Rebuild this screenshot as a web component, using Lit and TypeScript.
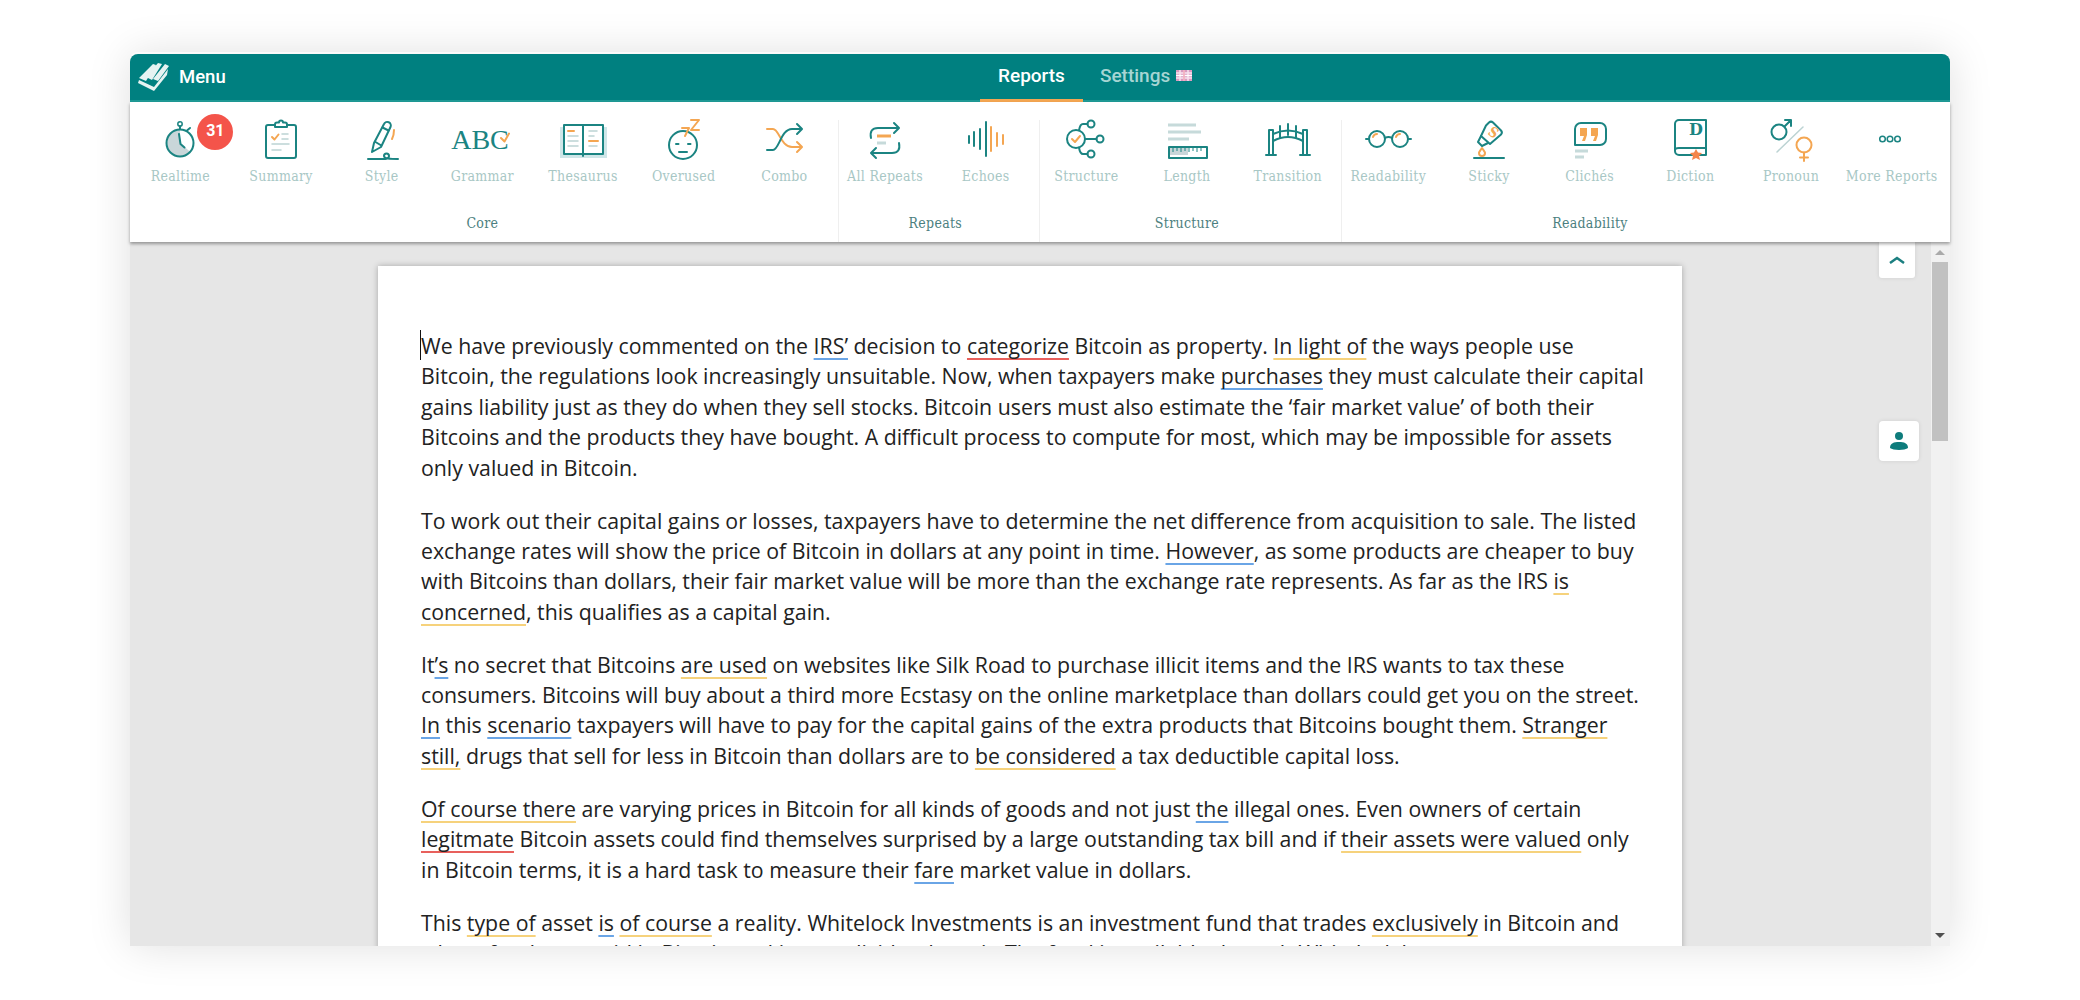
import { LitElement, html, svg, css } from "lit";
import { customElement } from "lit/decorators.js";

const icons: Record<string, unknown> = {
  realtime: svg`<path class="f" d="M32 11v12.700l10 9A13 13 0 0 1 19 23.700a13 13 0 0 1 13-12.700z"/><circle class="t" cx="32" cy="24" r="13.500"/><circle class="t1" cx="32" cy="5" r="2.200"/><path class="t" d="M32 7v3M39 11.500l3-2.500"/><path class="t" d="M31 15l1.500 10 4 3.500"/>`,
  summary: svg`<rect class="t" x="17" y="6" width="30" height="33" rx="2"/><path class="tw" d="M26 8V5.500a2 2 0 0 1 2-2h2a2 2 0 0 1 4 0h2a2 2 0 0 1 2 2V8z"/><path class="o" d="M23 18l2.500 2.500 4-5"/><path class="g" d="M33 15h6M33 20h6M23 25h17M23 31h9"/>`,
  style: svg`<path class="t" d="M22 33l2-9L34 5a3.500 3.500 0 0 1 6.500 3L31 28z"/><path class="t" d="M25.500 23l5 3M32.500 8.500l6 3"/><path class="o" d="M44 11q0 5-2 9"/><path class="t" d="M18 40h12c3 0 9 1 9-3a2.500 2.500 0 0 0-5 0c0 3 6 3 14 3"/>`,
  grammar: svg`<text class="abc" x="30" y="30" text-anchor="middle">ABC</text><path class="o" d="M51 19l3.500 3.500 4.500-8"/>`,
  thesaurus: svg`<rect class="fb" x="9" y="8" width="47" height="31"/><path class="tw" d="M13 6h19v29H13zM32 6h20v29H32z"/><path class="t" d="M32 35v2"/><path class="o" d="M17 12h6M38 22h9"/><path class="g" d="M17 17h10M17 22h10M17 27h10M38 12h8M38 17h5M38 27h8"/>`,
  overused: svg`<circle class="t" cx="31" cy="26" r="14"/><path class="t" d="M24 25h2.500M36 25h2.500M27 33h8"/><path class="o" d="M39 1h8l-8 10h8M30 9h7l-4 8"/>`,
  combo: svg`<path class="o" d="M15 10h6c6 0 8 18 19 18h9M45 23l5 5-5 5"/><path class="t" d="M15 31h6c6 0 8-21 19-21h9M45 5l5 5-5 5"/>`,
  repeats: svg`<path class="t" d="M18 19q-2-10 7-10h20M41 4l5 5-5 5M46 24q2 10-7 10H19M23 29l-5 5 5 5"/><path class="o3" d="M24 17h14"/><path class="g3" d="M24 24h9"/>`,
  echoes: svg`<path class="t" d="M15 17v7M20 13v14M26 10v20M32 3v34"/><path class="o" d="M37 8v24M43 14v13M49 16v9"/>`,
  structure: svg`<circle class="t" cx="22" cy="20" r="9"/><circle class="t" cx="37" cy="5" r="3.500"/><circle class="t" cx="46" cy="20" r="3.500"/><circle class="t" cx="37" cy="35" r="3.500"/><path class="t" d="M33.500 5H29q-3 0-4 6.500M31 20h11.500M33.500 35H29q-3 0-4-6.500"/><path class="o" d="M18 20l3 3 5-6"/>`,
  length: svg`<path class="g3" d="M13 6h28M13 13h33M13 20h21"/><rect class="f" x="15" y="29" width="18" height="7"/><rect class="t" x="14" y="28" width="38" height="11"/><path class="t1s" d="M18 28v5M22 28v4M26 28v5M30 28v4M34 28v5M38 28v4M42 28v5M46 28v4"/>`,
  transition: svg`<path class="t" d="M13 35V11M17 35V11M47 35V11M51 35V11M13 11h4M47 11h4M10 36h10M44 36h10"/><path class="t" d="M17 22q15-8 30 0M17 15q15-7 30 0"/><path class="t" d="M24 7v12M32 5v11M40 7v12"/>`,
  readability: svg`<circle class="t" cx="21" cy="20" r="8"/><circle class="t" cx="44" cy="20" r="8"/><path class="t" d="M29 19q3.500-2 7 0M13 20h-3M52 20h3"/><path class="o" d="M17 18q1-3 4-3M40 18q1-3 4-3"/>`,
  sticky: svg`<path class="t" d="M29 6.500l3-3a3 3 0 0 1 4 0l8 8a3 3 0 0 1 0 4L33 25l-9-8z"/><path class="t" d="M24 17l-3 6 4 4 6-3"/><text class="s" x="36" y="18" text-anchor="middle" transform="rotate(35 36 14)">S</text><path class="o" d="M25 29c-2 3-3 4-3 5a3 3 0 0 0 6 0c0-1-1-2-3-5z"/><path class="t" d="M17 39h30"/>`,
  cliches: svg`<path class="t" d="M23 4h19a6 6 0 0 1 6 6v10a6 6 0 0 1-6 6H19l-2 0V10a6 6 0 0 1 6-6z"/><path class="of" d="M22 9h7v7l-2 6h-3l2-5h-4zM33 9h7v7l-2 6h-3l2-5h-4z"/><path class="g3" d="M17 32h13M17 38h9"/>`,
  diction: svg`<path class="t" d="M48 1v35H21a4 4 0 0 1-4-4V5a4 4 0 0 1 4-4zM17 31q0-2 4-2h27"/><text class="d" x="38" y="16" text-anchor="middle">D</text><path class="ofs" d="M38 30l2 3.500 4 .5-3 3 1 4-4-2-4 2 1-4-3-3 4-.5z"/>`,
  pronoun: svg`<circle class="t" cx="20" cy="13" r="7.500"/><path class="t" d="M25.500 7.500L32 1M26 1h6v6"/><path class="g" d="M18 33L44 8"/><circle class="o" cx="45" cy="26" r="7.500"/><path class="o" d="M45 33.500V42M41 38.500h8"/>`,
  more: svg`<circle class="t1" cx="22.500" cy="20" r="2.800"/><circle class="t1" cx="30" cy="20" r="2.800"/><circle class="t1" cx="37.500" cy="20" r="2.800"/>`,
};

const groups = [
  { name: "Core", items: [["Realtime", "realtime"], ["Summary", "summary"], ["Style", "style"], ["Grammar", "grammar"], ["Thesaurus", "thesaurus"], ["Overused", "overused"], ["Combo", "combo"]] },
  { name: "Repeats", items: [["All Repeats", "repeats"], ["Echoes", "echoes"]] },
  { name: "Structure", items: [["Structure", "structure"], ["Length", "length"], ["Transition", "transition"]] },
  { name: "Readability", items: [["Readability", "readability"], ["Sticky", "sticky"], ["Clichés", "cliches"], ["Diction", "diction"], ["Pronoun", "pronoun"], ["More Reports", "more"]] },
];

@customElement("app-root")
export class AppRoot extends LitElement {
  static styles = css`
    :host { display: block; height: 1000px; background: #fff; overflow: hidden; padding: 54px 130px 0; box-sizing: border-box; }
    .window { height: 892px; display: flex; flex-direction: column; border-radius: 8px 8px 0 0; background: #e6e6e6; box-shadow: 0 -2px 0 rgba(255,255,255,.7), 0 0 44px rgba(0,0,0,.13); position: relative; }
    .topbar { height: 46px; background: #008080; border-bottom: 2px solid #1f9a96; border-radius: 8px 8px 0 0; display: grid; grid-template-columns: 850px auto 1fr; align-items: stretch; flex: none; }
    .brand { display: flex; align-items: center; gap: 9px; padding-left: 8px; color: #fff; font: 500 18.500px Roboto, sans-serif; }
    .tabs { display: flex; align-items: stretch; }
    .tab { display: flex; align-items: center; gap: 6px; padding: 0 18px 3px; color: #fff; font: 500 19px Roboto, sans-serif; margin-bottom: -2px; border-bottom: 3px solid transparent; box-sizing: border-box; }
    .tab.on { border-bottom-color: #f4a652; }
    .tab.off { color: #a6d5d3; padding-left: 17px; }
    .toolbar { height: 140px; flex: none; background: #fff; display: grid; grid-template-columns: 7fr 2fr 3fr 6fr; padding-right: 8px; box-shadow: 0 2px 3px rgba(0,0,0,.35); position: relative; z-index: 2; }
    .group { display: flex; flex-direction: column; position: relative; }
    .group + .group::before { content: ""; position: absolute; left: 3px; top: 18px; bottom: 0; width: 1px; background: #efefef; }
    .items { display: flex; flex: 1; padding-top: 17px; }
    .item { flex: 1; display: flex; flex-direction: column; align-items: center; min-width: 0; }
    .item svg { width: 64px; height: 44px; overflow: visible; display: block; flex: none; }
    .item .lab { margin-top: 4px; font: 14px/18px "DejaVu Serif Condensed", "DejaVu Serif", serif; letter-spacing: .3px; color: #a8c7c5; white-space: nowrap; }
    .iconwrap { position: relative; }
    .badge { position: absolute; left: 49px; top: -5px; width: 36px; height: 36px; border-radius: 50%; background: #f4544a; color: #fff; font: 700 16px/34px Roboto, sans-serif; text-align: center; }
    .gname { text-align: center; font: 14px/18px "DejaVu Serif Condensed", "DejaVu Serif", serif; letter-spacing: .3px; color: #4c7f80; padding-bottom: 10px; }
    .gname.left { padding-right: 100px; }
    svg .t { fill: none; stroke: #1b8482; stroke-width: 2; stroke-linecap: round; stroke-linejoin: round; }
    svg .t1 { fill: none; stroke: #1b8482; stroke-width: 1.500; }
    svg .t1s { fill: none; stroke: #1b8482; stroke-width: 1; }
    svg .tw { fill: #fff; stroke: #1b8482; stroke-width: 2; stroke-linejoin: round; }
    svg .o { fill: none; stroke: #f4a652; stroke-width: 2; stroke-linecap: round; stroke-linejoin: round; }
    svg .o3 { fill: none; stroke: #f4a652; stroke-width: 3; }
    svg .of { fill: #f4a652; }
    svg .ofs { fill: #f4854a; }
    svg .g { fill: none; stroke: #bcd3d3; stroke-width: 1.500; stroke-linecap: round; }
    svg .g3 { fill: none; stroke: #c6dada; stroke-width: 3; }
    svg .f { fill: #c9d6d9; }
    svg .fb { fill: #cfe6e8; }
    svg .abc { font: 28px "Liberation Serif", serif; fill: #1b8482; }
    svg .s { font: 700 14px "DejaVu Serif Condensed", serif; fill: #f4a652; }
    svg .d { font: 700 16px "DejaVu Serif", serif; fill: #1b8482; }
    .body { flex: 1; min-height: 0; display: flex; position: relative; overflow: hidden; }
    .main { flex: 1; min-width: 0; overflow: hidden; padding: 24px 0 0 248px; }
    .paper { width: 1304px; background: #fff; box-shadow: 0 0 6px rgba(0,0,0,.28); padding: 65px 0 0 43px; box-sizing: border-box; height: 800px; position: relative; font: 21.300px/30.400px "Open Sans", sans-serif; color: #222; white-space: nowrap; }
    .paper p { margin: 0 0 22.500px; }
    .caret { position: absolute; left: 42px; top: 64px; width: 1px; height: 30px; background: #111; }
    .b, .r, .y { text-decoration: underline; text-decoration-thickness: 2px; text-underline-offset: 4px; text-decoration-skip-ink: none; }
    .b { text-decoration-color: #6aa5e6; }
    .r { text-decoration-color: #e8605c; }
    .y { text-decoration-color: #f6d27c; }
    .scroll { width: 19px; flex: none; background: #f1f1f1; position: relative; }
    .thumb { position: absolute; left: 1px; right: 2px; top: 20px; height: 179px; background: #c1c1c1; }
    .up, .down { position: absolute; left: 4px; width: 0; height: 0; border-left: 5px solid transparent; border-right: 5px solid transparent; }
    .up { top: 8px; border-bottom: 5px solid #aaa; }
    .down { bottom: 8px; border-top: 5px solid #505050; }
    .side { position: absolute; left: 1749px; background: #fff; display: flex; align-items: center; justify-content: center; box-shadow: 0 0 4px rgba(0,0,0,.1); }
    .collapse { top: 0; width: 36px; height: 36px; border-radius: 0 0 3px 3px; }
    .person { top: 179px; width: 40px; height: 40px; border-radius: 4px; }
  `;

  render() {
    return html`<div class="window">
      <div class="topbar">
        <div class="brand">
          <svg width="32" height="28" viewBox="0 0 32 28"><path fill="#e6f3f2" d="M1 15l7 3L18 2l-3-1zM8 14l6 3L24 1l-4-1zM15 16l5 2L31 3l-4-2zM1 17l15 7 14-18-1 6-13 16-16-8z"/></svg>
          Menu
        </div>
        <div class="tabs">
          <div class="tab on">Reports</div>
          <div class="tab off">Settings
            <svg width="16" height="11" viewBox="0 0 16 11"><rect width="16" height="11" fill="#d99ac0"/><path d="M0 3h16M0 8h16M4 0v11M12 0v11" stroke="#f6e3ee" stroke-width="1.500"/><path d="M8 0v11M0 5.500h16" stroke="#fff" stroke-width="1.500"/><path d="M8 0v11" stroke="#e85a78" stroke-width=".8"/></svg>
          </div>
        </div>
        <div></div>
      </div>
      <div class="toolbar">
        ${groups.map((g) => html`<div class="group">
          <div class="items">
            ${g.items.map(([label, key]) => html`<div class="item">
              <div class="iconwrap">
                <svg viewBox="0 0 64 44">${icons[key]}</svg>
                ${key === "realtime" ? html`<div class="badge">31</div>` : ""}
              </div>
              <div class="lab">${label}</div>
            </div>`)}
          </div>
          <div class="gname ${g.name === "Readability" ? "left" : ""}">${g.name}</div>
        </div>`)}
      </div>
      <div class="body">
        <div class="main">
          <div class="paper">
            <div class="caret"></div>
            <p>We have previously commented on the <span class="b">IRS’</span> decision to <span class="r">categorize</span> Bitcoin as property. <span class="y">In light of</span> the ways people use<br>
            Bitcoin, the regulations look increasingly unsuitable. Now, when taxpayers make <span class="b">purchases</span> they must calculate their capital<br>
            gains liability just as they do when they sell stocks. Bitcoin users must also estimate the ‘fair market value’ of both their<br>
            Bitcoins and the products they have bought. A difficult process to compute for most, which may be impossible for assets<br>
            only valued in Bitcoin.</p>
            <p>To work out their capital gains or losses, taxpayers have to determine the net difference from acquisition to sale. The listed<br>
            exchange rates will show the price of Bitcoin in dollars at any point in time. <span class="b">However</span>, as some products are cheaper to buy<br>
            with Bitcoins than dollars, their fair market value will be more than the exchange rate represents. As far as the IRS <span class="y">is</span><br>
            <span class="y">concerned</span>, this qualifies as a capital gain.</p>
            <p>It<span class="b">’s</span> no secret that Bitcoins <span class="y">are used</span> on websites like Silk Road to purchase illicit items and the IRS wants to tax these<br>
            consumers. Bitcoins will buy about a third more Ecstasy on the online marketplace than dollars could get you on the street.<br>
            <span class="b">In</span> this <span class="b">scenario</span> taxpayers will have to pay for the capital gains of the extra products that Bitcoins bought them. <span class="y">Stranger</span><br>
            <span class="y">still,</span> drugs that sell for less in Bitcoin than dollars are to <span class="y">be considered</span> a tax deductible capital loss.</p>
            <p><span class="y">Of course there</span> are varying prices in Bitcoin for all kinds of goods and not just <span class="b">the</span> illegal ones. Even owners of certain<br>
            <span class="r">legitmate</span> Bitcoin assets could find themselves surprised by a large outstanding tax bill and if <span class="y">their assets were valued</span> only<br>
            in Bitcoin terms, it is a hard task to measure their <span class="b">fare</span> market value in dollars.</p>
            <p>This <span class="y">type of</span> asset <span class="b">is</span> <span class="y">of course</span> a reality. Whitelock Investments is an investment fund that trades <span class="y">exclusively</span> in Bitcoin and<br>
            where funds are paid in Bitcoin and it pays dividends on it. The fund is available through Whitelock Investments to most</p>
          </div>
        </div>
        <div class="scroll"><div class="up"></div><div class="thumb"></div><div class="down"></div></div>
        <div class="side collapse"><svg width="16" height="8" viewBox="0 0 16 8"><path d="M1 7l7-5 7 5" fill="none" stroke="#1b7f80" stroke-width="2.500"/></svg></div>
        <div class="side person"><svg width="18" height="20" viewBox="0 0 18 20"><circle cx="9" cy="5" r="4" fill="#0e7c7c"/><path d="M0 17c0-5 4-6 9-6s9 1 9 6c-3 2.500-15 2.500-18 0z" fill="#0e7c7c"/></svg></div>
      </div>
    </div>`;
  }
}
